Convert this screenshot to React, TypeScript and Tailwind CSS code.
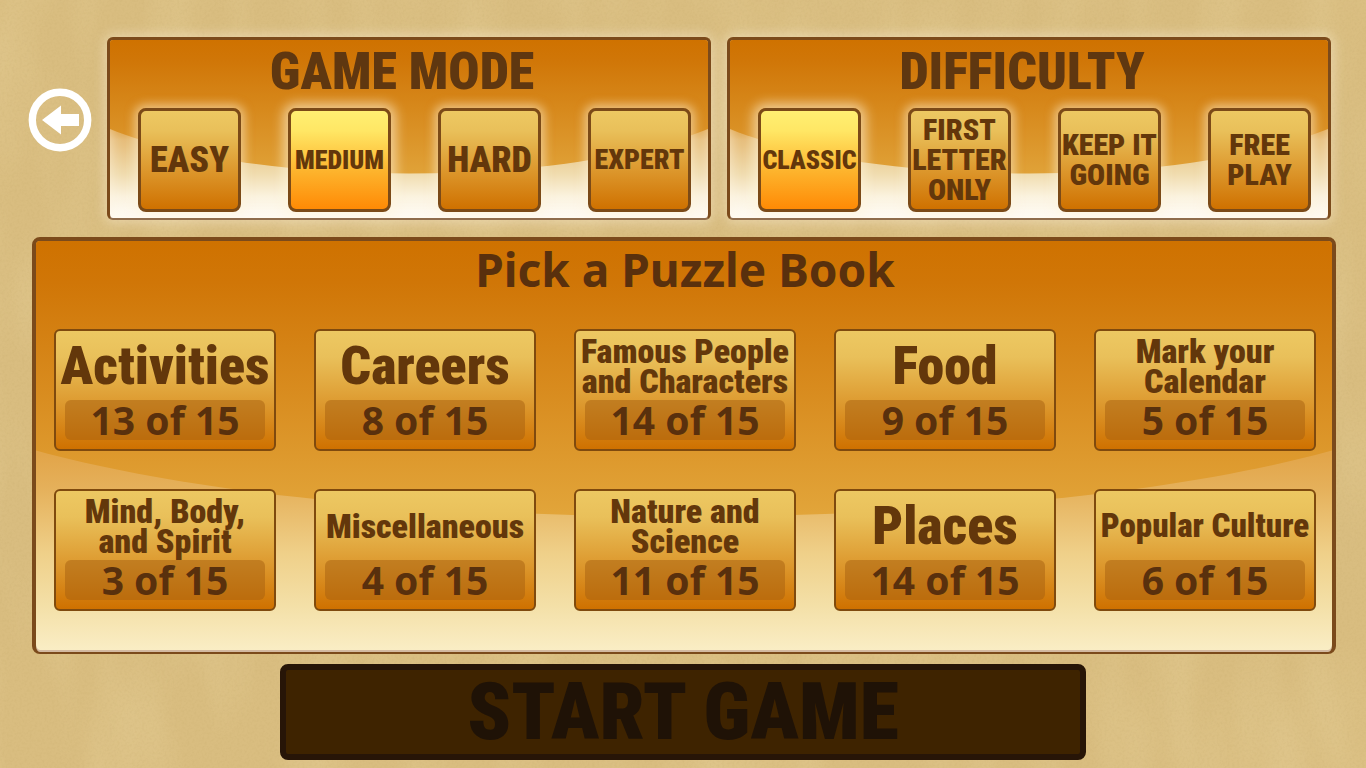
type Choice = { lines: string[]; size: string; selected?: boolean };
type Book = { lines: string[]; size: string; done: number };

const modes: Choice[] = [
  { lines: ["EASY"], size: "text-4xl" },
  { lines: ["MEDIUM"], size: "text-[26px]", selected: true },
  { lines: ["HARD"], size: "text-4xl" },
  { lines: ["EXPERT"], size: "text-[28px]" },
];

const difficulties: Choice[] = [
  { lines: ["CLASSIC"], size: "text-[26px]", selected: true },
  { lines: ["FIRST", "LETTER", "ONLY"], size: "text-3xl" },
  { lines: ["KEEP IT", "GOING"], size: "text-3xl" },
  { lines: ["FREE", "PLAY"], size: "text-3xl" },
];

const books: Book[] = [
  { lines: ["Activities"], size: "text-[54px]", done: 13 },
  { lines: ["Careers"], size: "text-[54px]", done: 8 },
  { lines: ["Famous People", "and Characters"], size: "text-[34px]", done: 14 },
  { lines: ["Food"], size: "text-[54px]", done: 9 },
  { lines: ["Mark your", "Calendar"], size: "text-[34px]", done: 5 },
  { lines: ["Mind, Body,", "and Spirit"], size: "text-[34px]", done: 3 },
  { lines: ["Miscellaneous"], size: "text-[34px]", done: 4 },
  { lines: ["Nature and", "Science"], size: "text-[34px]", done: 11 },
  { lines: ["Places"], size: "text-[54px]", done: 14 },
  { lines: ["Popular Culture"], size: "text-[33px]", done: 6 },
];

const total = 15;
const display = "font-['Roboto_Condensed','Liberation_Sans',sans-serif] font-black";
const plain = "font-['Noto_Sans','Open_Sans',sans-serif] font-bold";

function Lines({ lines }: { lines: string[] }) {
  return (
    <>
      {lines.map((line) => (
        <span key={line} className="block whitespace-nowrap">
          {line}
        </span>
      ))}
    </>
  );
}

/* Sandy paper: fine grain over broad, soft patches. */
function Paper() {
  return (
    <svg aria-hidden="true" className="pointer-events-none absolute inset-0 h-full w-full">
      <filter id="patches">
        <feTurbulence type="fractalNoise" baseFrequency="0.02 0.006" numOctaves="2" seed="4" />
        <feColorMatrix values="0 0 0 0 0.93  0 0 0 0 0.8  0 0 0 0 0.48  1.6 0 0 0 -0.6" />
      </filter>
      <filter id="grain">
        <feTurbulence type="fractalNoise" baseFrequency="0.4" numOctaves="2" seed="9" />
        <feColorMatrix values="0 0 0 0 0.5  0 0 0 0 0.36  0 0 0 0 0.12  1.2 0 0 0 -0.5" />
      </filter>
      <rect width="100%" height="100%" filter="url(#patches)" opacity="0.22" />
      <rect width="100%" height="100%" filter="url(#grain)" opacity="0.25" />
    </svg>
  );
}

/* The orange dome that hangs over the pale lower part of a panel. */
function Dome({ id, edge, dip, end }: { id: string; edge: number; dip: number; end: string }) {
  const shoulder = dip - (dip - edge) * 0.35;
  return (
    <svg
      aria-hidden="true"
      className="pointer-events-none absolute inset-0 h-full w-full"
      viewBox="0 0 100 100"
      preserveAspectRatio="none"
    >
      <linearGradient id={id} gradientUnits="userSpaceOnUse" x1="0" y1="0" x2="0" y2={dip}>
        <stop offset="0" stopColor="#cf7200" />
        <stop offset="0.15" stopColor="#d07607" />
        <stop offset="1" stopColor={end} />
      </linearGradient>
      <path
        d={`M0 0H100V${edge}C88 ${shoulder} 70 ${dip} 50 ${dip}S12 ${shoulder} 0 ${edge}Z`}
        fill={`url(#${id})`}
      />
    </svg>
  );
}

function ChoicePanel({ id, title, choices }: { id: string; title: string; choices: Choice[] }) {
  return (
    <section
      aria-labelledby={id}
      className="relative min-w-0 flex-1 overflow-hidden rounded-md border-[3px] border-b-2 border-[#7b4a1b] border-b-[#8f6c4c] bg-[linear-gradient(#dd9c3a_48%,#e6bd79_56%,#f0dcae_75%,#fbf3df_88%,#fffdf8_100%)] shadow-[0_0_12px_3px_rgba(255,246,224,0.4),inset_0_0_12px_2px_rgba(255,246,230,0.5)]"
    >
      <Dome id={`${id}-dome`} edge={50} dip={75} end="#e0a238" />
      <div className="relative">
        <h2 id={id} className={`${display} pr-3.5 text-center text-[52px] leading-[64px] text-[#5f3710]`}>
          {title}
        </h2>
        <div className="flex justify-between pt-1 pr-[17px] pb-1.5 pl-7">
          {choices.map((c) => (
            <button
              key={c.lines[0]}
              type="button"
              aria-pressed={!!c.selected}
              className={`${display} ${c.size} flex h-[104px] w-[103px] flex-col items-center justify-center rounded-lg border-[3px] border-[#7b4a17] leading-[30px] text-[#63370b] ${
                c.selected
                  ? "bg-[linear-gradient(#ffef72,#ffe765_20%,#fdb32c_62%,#ff8a05)] shadow-[0_0_12px_5px_rgba(255,245,220,0.6)]"
                  : "bg-[linear-gradient(#edc862,#e9c05a_20%,#dc962b_62%,#cf7100)] shadow-[0_0_10px_4px_rgba(255,245,220,0.5)]"
              }`}
            >
              <Lines lines={c.lines} />
            </button>
          ))}
        </div>
      </div>
    </section>
  );
}

export default function App() {
  return (
    <main className="relative flex min-h-screen flex-col bg-[#d9bd80] pt-[37px] pb-2 select-none">
      <Paper />
      <div className="relative flex items-start gap-[15px] pr-[35px] pl-7">
        <button type="button" aria-label="Back" className="mt-[51px] size-16 shrink-0 rounded-full">
          <svg viewBox="0 0 64 64" className="size-16" fill="none" aria-hidden="true">
            <circle cx="32" cy="32" r="27.7" stroke="#fff" strokeWidth="7.4" />
            <path d="M14 32 33 17.500v8.500H51v12H33V46.500Z" fill="#fff" />
          </svg>
        </button>
        <div className="flex min-w-0 flex-1 gap-4">
          <ChoicePanel id="mode" title="GAME MODE" choices={modes} />
          <ChoicePanel id="difficulty" title="DIFFICULTY" choices={difficulties} />
        </div>
      </div>

      <section
        aria-labelledby="books"
        className="relative mt-[17px] mr-[30px] ml-8 overflow-hidden rounded-lg border-4 border-b-2 border-[#7b4a1b] bg-[linear-gradient(#e2a54a_52%,#e5b05a_60%,#efd089_76%,#f4e0a8_89%,#faeec6_100%)] shadow-[inset_0_-2px_0_#d3b9a0]"
      >
        <Dome id="books-dome" edge={51} dip={67} end="#e2a53a" />
        <div className="relative pr-4 pb-[41px] pl-[18px]">
          <h2 id="books" className={`${plain} text-center text-[46px] leading-[56px] text-[#59300d]`}>
            Pick a Puzzle Book
          </h2>
          <ul className="grid grid-cols-5 gap-[38px] pt-8">
            {books.map((b) => (
              <li key={b.lines[0]}>
                <button
                  type="button"
                  className="flex w-full flex-col items-center rounded-md border-2 border-[#7f4a0e] bg-[linear-gradient(#edc862,#e9c05a_22%,#dc962b_65%,#cf7100)] pb-[9px] text-[#63370b]"
                >
                  <span className={`${display} ${b.size} flex h-[69px] flex-col justify-center leading-[30px]`}>
                    <Lines lines={b.lines} />
                  </span>
                  <span
                    className={`${plain} block w-[200px] rounded-md bg-[#a55f0f]/50 text-[39px] leading-10 text-[#59300d]`}
                  >
                    {b.done} of {total}
                  </span>
                </button>
              </li>
            ))}
          </ul>
        </div>
      </section>

      <button
        type="button"
        disabled
        className={`${display} relative mt-2.5 h-24 w-[59%] self-center rounded-lg border-[6px] border-[#271507] bg-[#3e2300] text-[80px] leading-[84px] text-[#1f1206]`}
      >
        START GAME
      </button>
    </main>
  );
}
